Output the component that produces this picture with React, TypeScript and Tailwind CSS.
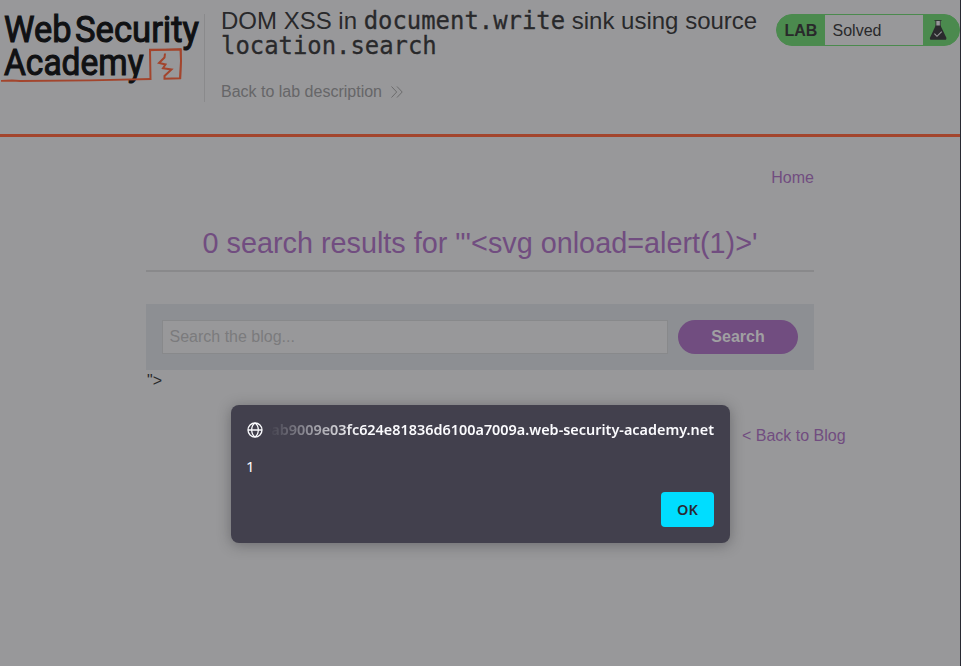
import React from "react";

function Logo() {
  return (
    <svg width="204" height="90" viewBox="0 0 204 90" className="block shrink-0">
      <g fill="#101113" stroke="#101113" strokeWidth="1.1" fontFamily="Roboto, 'Liberation Sans', sans-serif" fontWeight="400" fontSize="37">
        <text x="4" y="42" textLength="67.500" lengthAdjust="spacingAndGlyphs">Web</text>
        <text x="75" y="42" textLength="124" lengthAdjust="spacingAndGlyphs">Security</text>
        <text x="4" y="74.500" textLength="139.500" lengthAdjust="spacingAndGlyphs">Academy</text>
      </g>
      <g fill="none" stroke="#a3452d">
        <path d="M1 80.800 L12 80.500 L20 81 L90 80.400 L151 79" strokeWidth="1.8" />
        <path d="M150.500 80 L150 49.700 L180.500 49.500 L181 61 L180 78.200 L164.500 78.800 L164.500 76 L171.500 69.500 L163 68.200 L165.500 64.500 L159 63 L164.500 57.500 L165 53.500" strokeWidth="2" />
        <path d="M149 50.500 L181.500 49 M181 49 L180.500 79" strokeWidth="1.4" />
      </g>
    </svg>
  );
}

function LabStatus() {
  return (
    <div className="mt-[14px] ml-auto flex h-8 w-[184px] shrink-0 overflow-hidden rounded-full border border-[#4b8a4e] bg-[#4b8a4e] text-[16px] leading-[32px]">
      <span className="w-12 pl-[7.5px] font-bold text-[#29292b]">LAB</span>
      <span className="w-[98px] bg-[#98989a] pl-[7.5px] text-[#29292b]">Solved</span>
      <svg width="36" height="30" viewBox="0 0 36 30" className="block">
        <path d="M13 6h4.500v6H13z" fill="#98989a" />
        <path d="M11.500 5.500h7M12.900 6v6M17.300 6v6" stroke="#2a2a2d" strokeWidth="0.8" fill="none" />
        <path d="M12.700 10.500h4.800l5.600 11.700q1 2.600-1.300 2.600H8.500q-2.300 0-1.300-2.600z" fill="#2a2a2d" />
        <path d="m11.400 18.700 2.600 2.600 4.700-4.600" stroke="#98989a" strokeWidth="1.1" fill="none" />
      </svg>
    </div>
  );
}

function Header() {
  return (
    <header className="flex h-[137px] border-b-[3px] border-[#a3452d]">
      <Logo />
      <div className="mt-[14px] h-[88px] w-px shrink-0 bg-[#8a8a8c]" />
      <div className="w-[545px] shrink-0 pl-4 text-[#29292b]">
        <h2 className="mt-[8px] text-[24px] leading-[25px] whitespace-nowrap">
          <span className="block h-[25px]">
            DOM XSS in <span className="font-['DejaVu_Sans_Mono',monospace] text-[23.9px] [-webkit-text-stroke:0.3px_#29292b]">document.write</span> sink using source
          </span>
          <span className="mt-px block h-[25px] font-['DejaVu_Sans_Mono',monospace] text-[23.9px] [-webkit-text-stroke:0.3px_#29292b]">location.search</span>
        </h2>
        <a className="mt-[23px] flex items-center text-[16px] leading-[20px] text-[#666668]">
          Back to lab description
          <svg width="12" height="12" viewBox="0 0 12 12" className="ml-[9px] block" fill="none" stroke="#666668" strokeWidth="0.9">
            <path d="m.5.5 5.200 5.500-5.200 5.500M6 .5 11.200 6 6 11.500" />
          </svg>
        </a>
      </div>
      <LabStatus />
    </header>
  );
}

function Globe() {
  return (
    <svg width="16" height="16" viewBox="0 0 16 16" className="block shrink-0" fill="none" stroke="#fbfbfe" strokeWidth="1.3">
      <circle cx="8" cy="8" r="7" />
      <path d="M1 8h14M8 1c-2.300 1.500-3.300 4-3.300 7s1 5.500 3.300 7M8 1c2.300 1.500 3.300 4 3.300 7s-1 5.500-3.300 7" />
    </svg>
  );
}

function AlertDialog() {
  return (
    <div className="absolute top-[405px] left-[231px] flex h-[138px] w-[499px] flex-col rounded-lg bg-[#42404d] px-4 pb-4 font-['Noto_Sans',sans-serif] text-[#fbfbfe] shadow-[0_2px_14px_rgba(40,40,45,0.4)]">
      <div className="mt-[14px] flex h-[22px] items-center">
        <Globe />
        <div className="ml-[6px] flex h-[22px] min-w-0 flex-1 justify-end overflow-hidden [mask-image:linear-gradient(to_right,transparent,black_90px)]">
          <svg width="451" height="22" className="block shrink-0">
            <text x="0" y="15.500" textLength="451" lengthAdjust="spacingAndGlyphs" fill="#fbfbfe" fontSize="15" fontWeight="600">0ab9009e03fc624e81836d6100a7009a.web-security-academy.net</text>
          </svg>
        </div>
      </div>
      <p className="mt-[14px] -ml-px text-[15px] leading-[22px]">1</p>
      <button className="mt-auto ml-auto h-[35px] w-[53px] rounded-[4px] bg-[#00ddff] text-[14.5px] font-semibold text-[#2b2a33]">OK</button>
    </div>
  );
}

export default function App() {
  return (
    <div className="relative h-[666px] w-[961px] overflow-hidden border-r border-[#292a33] bg-[#98989a] font-['Liberation_Sans',Arial,sans-serif] text-[16px] text-[#29292b]">
      <Header />
      <main className="ml-[146px] w-[668px]">
        <nav className="pt-[31px] text-right leading-[20px] text-[#714d80]">Home</nav>
        <h1 className="mt-8 h-[52px] border-b-2 border-[#89898b] text-center text-[28.8px] leading-[46px] whitespace-nowrap text-[#714d80]">
          0 search results for &quot;'&lt;svg onload=alert(1)&gt;'
        </h1>
        <div className="mt-8 flex h-[66px] items-center gap-[10px] bg-[#8d8f93] px-4">
          <div className="h-[34px] w-[506px] border border-[#88898b] bg-[#98989a] pl-[6.5px] leading-[32px] text-[#7b7b7d]">Search the blog...</div>
          <button className="h-[34px] w-[120px] rounded-full bg-[#714d80] font-bold text-[#a0a0a2]">Search</button>
        </div>
        <div className="pt-px pl-px leading-[20px]">&quot;&gt;</div>
        <a className="mt-[35px] ml-[596px] block leading-[20px] whitespace-nowrap text-[#714d80]">&lt; Back to Blog</a>
      </main>
      <AlertDialog />
    </div>
  );
}
